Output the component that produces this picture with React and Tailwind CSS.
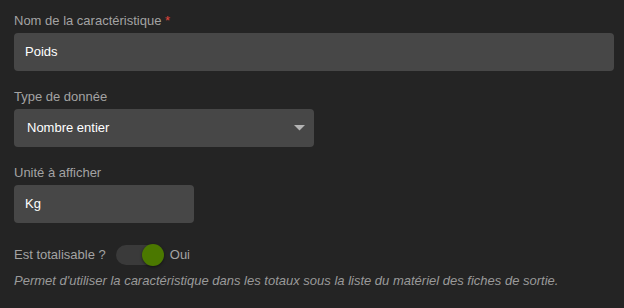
import React from 'react';

const font = { fontFamily: '"Liberation Sans", Arial, sans-serif' };

function Field({ label, required, children, className = '' }) {
  return (
    <div className={`flex flex-col ${className}`}>
      <label className="text-[13px] leading-[16px] text-[#a3a3a3] mb-[4px]">
        {label}
        {required && <span className="text-[#e0443b]"> *</span>}
      </label>
      {children}
    </div>
  );
}

export default function App() {
  return (
    <div className="w-[624px] h-[308px] bg-[#242424] px-[14px] pt-[13px] overflow-hidden" style={font}>
      <Field label="Nom de la caractéristique" required>
        <div className="h-[38px] w-[600px] rounded-[4px] bg-[#474747] flex items-center px-[11px] text-[13px] text-white">
          Poids
        </div>
      </Field>

      <Field label="Type de donnée" className="mt-[18px]">
        <div className="h-[38px] w-[300px] rounded-[4px] bg-[#474747] flex items-center justify-between pl-[13px] pr-[9px] text-[13px] text-white">
          <span>Nombre entier</span>
          <svg width="11" height="6" viewBox="0 0 11 6">
            <path d="M0 0 L11 0 L5.5 5.5 Z" fill="#b3b3b3" />
          </svg>
        </div>
      </Field>

      <Field label="Unité à afficher" className="mt-[18px]">
        <div className="h-[38px] w-[180px] rounded-[4px] bg-[#474747] flex items-center px-[11px] text-[13px] text-white">
          Kg
        </div>
      </Field>

      <div className="mt-[20px] flex items-center h-[24px]">
        <span className="text-[13px] text-[#a3a3a3]">Est totalisable ?</span>
        <div className="relative ml-[10px] w-[46px] h-[20px] rounded-full bg-[#3a3a3a]">
          <div className="absolute right-[-2px] top-[-1px] w-[22px] h-[22px] rounded-full bg-[#4b7800] shadow-[0_1px_3px_rgba(0,0,0,0.5)]" />
        </div>
        <span className="ml-[8px] text-[13px] text-[#a3a3a3]">Oui</span>
      </div>

      <p className="mt-[6px] text-[13px] leading-[16px] italic text-[#9a9a9a]">
        Permet d'utiliser la caractéristique dans les totaux sous la liste du matériel des fiches de sortie.
      </p>
    </div>
  );
}
